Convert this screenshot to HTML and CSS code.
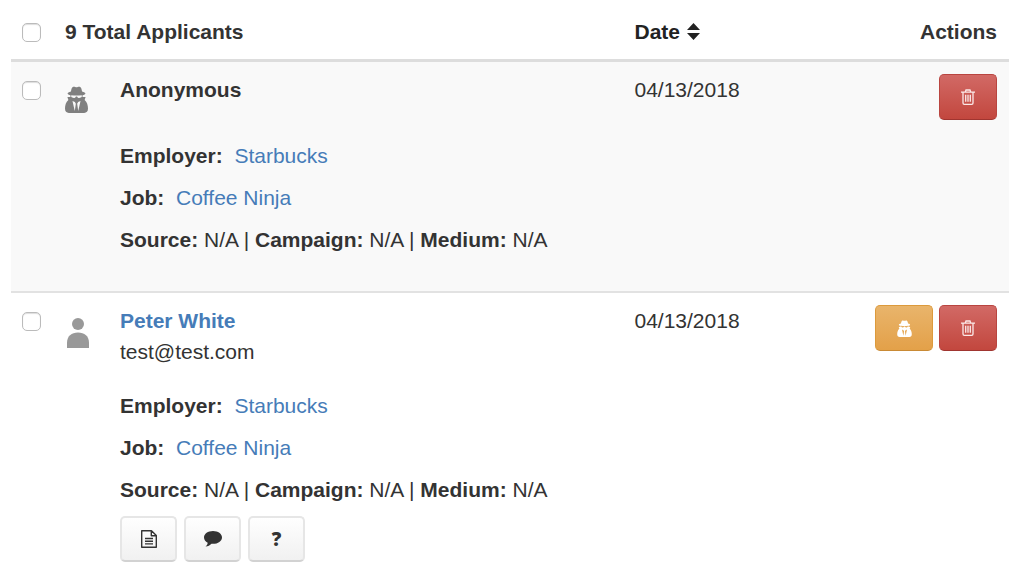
FILE: index.html
```html
<!DOCTYPE html>
<html lang="en">
<head>
    <meta charset="UTF-8">
    <meta name="viewport" content="width=device-width, initial-scale=1.0">
    <title>Applicants</title>
    <link rel="stylesheet" href="styles.css">
</head>
<body>
    <svg class="symbols" aria-hidden="true">
        <symbol id="icon-secret" viewBox="0 0 24 28">
            <path fill-rule="evenodd" d="M8.500 .8C10 .3 11 1.300 12 1.300S14 .3 15.500 .8C17 1.500 17.400 3.500 17.800 5.700C20 6.200 21.300 7 21.300 7.700C21.300 8.500 20 9.200 18.300 9.500V11.300L21.500 11.500L20.500 14.500C23 16.500 24 20 24 23.500C24 26.700 22.500 28 20 28H4C1.500 28 0 26.700 0 23.500C0 20 1 16.500 3.500 14.500L2.500 11.500L5.700 11.300V9.500C4 9.200 2.700 8.500 2.700 7.700C2.700 7 4 6.200 6.200 5.700C6.600 3.500 7 1.500 8.500 .8ZM6.500 9.500V11.300L8.300 12.300C9.500 12.800 10.800 12 11.400 10.800H12.600C13.200 12 14.500 12.800 15.700 12.300L17.500 11.300V9.500C14 10 10 10 6.500 9.500ZM7.800 15.500L10.200 26L11.300 18.500L10.300 16.700ZM16.200 15.500L13.800 26L12.700 18.500L13.700 16.700Z"/>
        </symbol>
        <symbol id="icon-person" viewBox="0 0 22 30">
            <circle cx="11" cy="6" r="6"/>
            <path d="M0 30V25C0 18 4.500 14.500 11 14.500S22 18 22 25V30Z"/>
        </symbol>
        <symbol id="icon-trash" viewBox="0 0 14 16">
            <path fill="none" stroke="currentColor" stroke-width="1.300" d="M0 3.200H14M4.300 3L5 1H9L9.700 3M2 3.500V14Q2 15.300 3.300 15.300H10.700Q12 15.300 12 14V3.500M4.700 5.800V12.800M7 5.800V12.800M9.300 5.800V12.800"/>
        </symbol>
        <symbol id="icon-file" viewBox="0 0 16 18">
            <path fill="none" stroke="currentColor" stroke-width="1.400" stroke-linejoin="round" d="M.7.7H10.500L15.300 5.500V17.300H.7ZM10.300.9V5.700H15.100M4 8.500H12M4 11.200H12M4 13.900H12"/>
        </symbol>
        <symbol id="icon-comment" viewBox="0 0 18 16">
            <path d="M9 0C14 0 18 2.800 18 6.400S14 12.800 9 12.800L7.500 12.700C6 14.200 4 15.300 1.500 15.600C2.700 14.500 3.500 13.300 3.700 11.700C1.400 10.500 0 8.600 0 6.400C0 2.800 4 0 9 0Z"/>
        </symbol>
        <symbol id="icon-sort" viewBox="0 0 13 17">
            <path d="M6.500 0L13 7H0ZM0 10H13L6.500 17Z"/>
        </symbol>
    </svg>

    <table class="applicants">
        <colgroup>
            <col class="col-check">
            <col class="col-icon">
            <col>
            <col class="col-date">
            <col class="col-actions">
        </colgroup>
        <thead>
            <tr>
                <th><input type="checkbox" class="check" aria-label="Select all applicants"></th>
                <th colspan="2">9 Total Applicants</th>
                <th><button type="button" class="sort">Date <svg class="icon-sort"><use href="#icon-sort"/></svg></button></th>
                <th class="actions-head">Actions</th>
            </tr>
        </thead>
        <tbody>
            <tr>
                <td><input type="checkbox" class="check" aria-label="Select Anonymous"></td>
                <td><svg class="avatar-secret"><use href="#icon-secret"/></svg></td>
                <td>
                    <div class="name anonymous"><strong>Anonymous</strong></div>
                    <p><strong>Employer:</strong>&nbsp; <a href="#">Starbucks</a></p>
                    <p><strong>Job:</strong>&nbsp; <a href="#">Coffee Ninja</a></p>
                    <p><strong>Source:</strong> N/A | <strong>Campaign:</strong> N/A | <strong>Medium:</strong> N/A</p>
                </td>
                <td>04/13/2018</td>
                <td>
                    <div class="actions">
                        <button type="button" class="btn btn-danger" aria-label="Delete"><svg class="icon-trash"><use href="#icon-trash"/></svg></button>
                    </div>
                </td>
            </tr>
            <tr>
                <td><input type="checkbox" class="check" aria-label="Select Peter White"></td>
                <td><svg class="avatar-person"><use href="#icon-person"/></svg></td>
                <td>
                    <div class="name"><a href="#"><strong>Peter White</strong></a><br>test@test.com</div>
                    <p><strong>Employer:</strong>&nbsp; <a href="#">Starbucks</a></p>
                    <p><strong>Job:</strong>&nbsp; <a href="#">Coffee Ninja</a></p>
                    <p><strong>Source:</strong> N/A | <strong>Campaign:</strong> N/A | <strong>Medium:</strong> N/A</p>
                    <div class="tools">
                        <button type="button" class="btn" aria-label="Resume"><svg class="icon-file"><use href="#icon-file"/></svg></button>
                        <button type="button" class="btn" aria-label="Comments"><svg class="icon-comment"><use href="#icon-comment"/></svg></button>
                        <button type="button" class="btn btn-question" aria-label="Questions">?</button>
                    </div>
                </td>
                <td>04/13/2018</td>
                <td>
                    <div class="actions">
                        <button type="button" class="btn btn-warning" aria-label="Make anonymous"><svg class="icon-secret"><use href="#icon-secret"/></svg></button>
                        <button type="button" class="btn btn-danger" aria-label="Delete"><svg class="icon-trash"><use href="#icon-trash"/></svg></button>
                    </div>
                </td>
            </tr>
        </tbody>
    </table>
</body>
</html>
```

FILE: styles.css
```css
* {
    box-sizing: border-box;
}
body {
    font-family: "Liberation Sans", Arial, sans-serif;
    font-size: 21px;
    line-height: 31px;
    background-color: #fff;
    color: #333;
    margin: 0;
    padding: 4px 15px 0 11px;
}
svg {
    display: block;
    fill: currentColor;
}
.symbols {
    display: none;
}
a {
    color: #467cb8;
    text-decoration: none;
}
p {
    margin: 0 0 11px;
}
.applicants {
    width: 100%;
    table-layout: fixed;
    border-collapse: separate;
    border-spacing: 0;
}
.col-check {
    width: 42px;
}
.col-icon {
    width: 55px;
}
.col-date {
    width: 24%;
}
.col-actions {
    width: 147px;
}
th, td {
    padding: 12px;
    text-align: left;
    vertical-align: top;
}
th {
    border-bottom: 3px solid #ddd;
}
td {
    border-bottom: 2px solid #e2e2e2;
}
tbody tr:first-child {
    background-color: #f9f9f9;
}
tbody tr:first-child td {
    padding-bottom: 25px;
}
tbody tr:last-child td {
    border-bottom: none;
}
.check {
    appearance: none;
    display: block;
    width: 19px;
    height: 19px;
    margin: 7px 0 0 -1px;
    border: 1px solid #bbb;
    border-radius: 5px;
    background-color: #fff;
    box-shadow: inset 0 1px 1px #ddd;
}
.check:checked {
    background-color: #467cb8;
}
.avatar-secret {
    width: 23px;
    height: 27px;
    margin-top: 12px;
    color: #808080;
}
.avatar-person {
    width: 22px;
    height: 30px;
    margin: 13px 0 0 2px;
    color: #999;
}
.name {
    margin-bottom: 23px;
}
.name.anonymous {
    margin-bottom: 35px;
}
.sort {
    display: flex;
    align-items: center;
    gap: 7px;
    padding: 0;
    border: none;
    background: none;
    font: inherit;
    color: #222;
    cursor: pointer;
}
.icon-sort {
    width: 13px;
    height: 17px;
}
.actions-head {
    text-align: right;
}
.actions, .tools {
    display: flex;
    gap: 6px;
}
.actions {
    justify-content: flex-end;
}
.tools {
    gap: 7px;
}
.btn {
    display: flex;
    align-items: center;
    justify-content: center;
    width: 57px;
    height: 46px;
    padding: 0;
    border: 2px solid #e6e6e6;
    border-bottom-color: #d2d2d2;
    border-radius: 5px;
    background: linear-gradient(#fff, #f0f0f0) border-box;
    color: #333;
    cursor: pointer;
}
.btn-danger, .btn-warning {
    width: 58px;
}
.btn-danger {
    border: 1px solid #b94540;
    border-bottom-color: #a03530;
    background: linear-gradient(#d26a66, #c2463d) border-box;
    color: #fbe9e8;
}
.btn-warning {
    border: 1px solid #dc9a3c;
    border-bottom-color: #c98a35;
    background: linear-gradient(#e9b56c, #e3a048) border-box;
    color: #fff;
}
.btn-question {
    font-family: "Open Sans", sans-serif;
    font-size: 19px;
    font-weight: 800;
}
.icon-trash {
    width: 14px;
    height: 16px;
}
.icon-secret {
    width: 15px;
    height: 17px;
}
.icon-file {
    width: 16px;
    height: 18px;
}
.icon-comment {
    width: 18px;
    height: 16px;
}
```
